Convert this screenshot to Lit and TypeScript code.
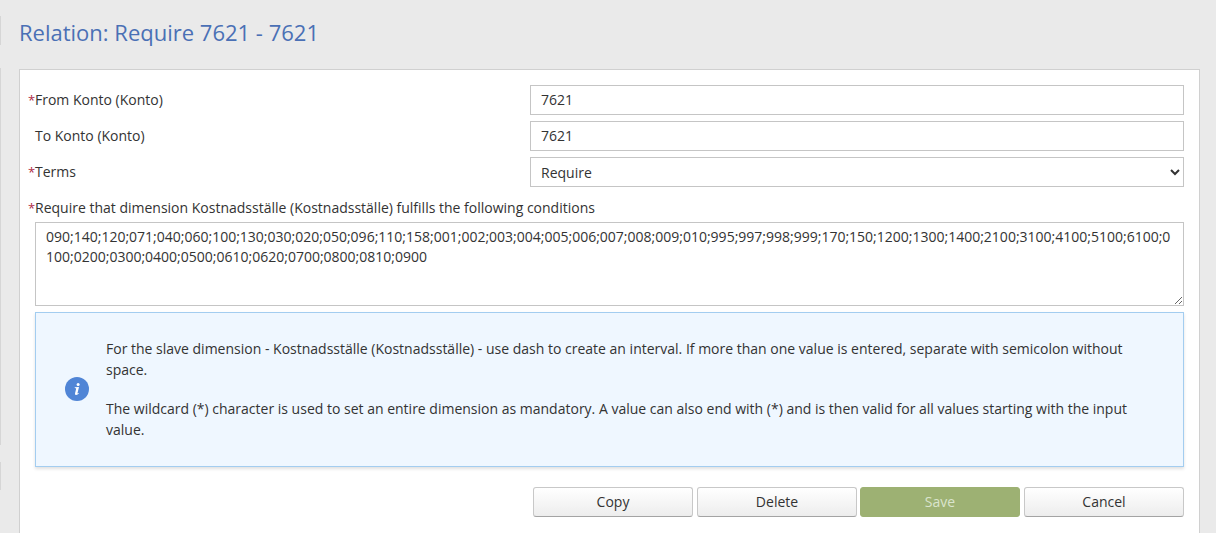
import { LitElement, html, css } from "lit";
import { customElement } from "lit/decorators.js";

const VALUES =
  "090;140;120;071;040;060;100;130;030;020;050;096;110;158;001;002;003;004;005;006;007;008;009;010;995;997;998;999;170;150;1200;1300;1400;2100;3100;4100;5100;6100;0100;0200;0300;0400;0500;0610;0620;0700;0800;0810;0900";

@customElement("app-root")
export class AppRoot extends LitElement {
  static styles = css`
    * { box-sizing: border-box; }
    :host {
      display: flex;
      height: 533px;
      overflow: hidden;
      background: #eaeaea;
      color: #333;
      font: 14px/20px "Open Sans", sans-serif;
    }
    .rail { width: 19px; flex: none; display: flex; flex-direction: column; padding-top: 16px; }
    .rail i { display: block; width: 1px; background: #d6d6d6; flex: none; }
    .r1 { height: 29px; margin-bottom: 23px; }
    .r2 { height: 377px; margin-bottom: 17px; }
    .r3 { height: 28px; }
    .main { width: 1181px; flex: none; display: flex; flex-direction: column; }
    h1 {
      margin: 0;
      height: 69px;
      padding-top: 17px;
      font-size: 22px;
      line-height: 30px;
      font-weight: 400;
      color: #4a70b5;
    }
    .panel {
      flex: 1;
      background: #fff;
      border: 1px solid #d0d0d0;
      border-bottom: 0;
      padding: 15px 15px 0;
    }
    .row { display: flex; height: 30px; margin-bottom: 6px; align-items: center; }
    label { width: 495px; flex: none; }
    .req::before {
      content: "*";
      color: #b02a45;
      font-size: 13px;
      line-height: 1;
      display: inline-block;
      width: 7px;
      margin-left: -7px;
    }
    input, select, textarea {
      font: inherit;
      color: #333;
      border: 1px solid #c5c5c5;
      border-radius: 0;
      background: #fff;
      margin: 0;
      outline: 0;
    }
    input, select { flex: 1; height: 30px; min-width: 0; }
    input { padding: 0 10px 2px; }
    select { padding: 0 0 0 6px; }
    .wide { display: block; height: 20px; width: auto; margin: 11px 0 4px; }
    textarea {
      display: block;
      width: 100%;
      height: 84px;
      padding: 4px 10px;
      word-break: break-all;
      resize: both;
      overflow: auto;
    }
    .info {
      margin-top: 6px;
      height: 155px;
      display: flex;
      align-items: center;
      background: #eff7ff;
      border: 1px solid #a3cdf0;
      box-shadow: 0 2px 3px rgba(0, 0, 0, 0.12);
      padding: 0 29px;
    }
    .info svg { width: 24px; height: 24px; flex: none; margin: 0 17px 1px 0; }
    .info p { margin: 0; line-height: 20.25px; }
    .info p + p { margin-top: 19.5px; }
    .actions { display: flex; justify-content: flex-end; gap: 4px; margin-top: 20px; }
    button {
      width: 160px;
      height: 30px;
      padding: 0;
      font: inherit;
      color: #333;
      border: 1px solid #c8c8c8;
      border-bottom-color: #a4a4a4;
      border-radius: 3px;
      background: linear-gradient(#fff, #ededed);
    }
    .save { background: #9db173; border-color: #9db173; color: #dae4cd; margin: 0 0 0 -1px; }
  `;

  render() {
    return html`
      <div class="rail"><i class="r1"></i><i class="r2"></i><i class="r3"></i></div>
      <div class="main">
        <h1>Relation: Require 7621 - 7621</h1>
        <div class="panel">
          <div class="row"><label class="req">From Konto (Konto)</label><input .value=${"7621"} /></div>
          <div class="row"><label>To Konto (Konto)</label><input .value=${"7621"} /></div>
          <div class="row">
            <label class="req">Terms</label>
            <select><option>Require</option></select>
          </div>
          <label class="wide req">Require that dimension Kostnadsställe (Kostnadsställe) fulfills the following conditions</label>
          <textarea spellcheck="false" .value=${VALUES}></textarea>
          <div class="info">
            <svg viewBox="0 0 24 24">
              <circle cx="12" cy="12" r="12" fill="#5085d6" />
              <circle cx="13.1" cy="7.6" r="1.5" fill="#fff" />
              <path d="M9.8 10.3L14 9.9L12.5 16.1Q12.5 16.8 13.7 16.1L13.9 16.6Q12.6 18 11.2 18Q9.7 18 10 16.5L11.2 11.4Q11.2 10.9 9.7 10.9Z" fill="#fff" />
            </svg>
            <div>
              <p>For the slave dimension - Kostnadsställe (Kostnadsställe) - use dash to create an interval. If more than one value is entered, separate with semicolon without space.</p>
              <p>The wildcard (*) character is used to set an entire dimension as mandatory. A value can also end with (*) and is then valid for all values starting with the input value.</p>
            </div>
          </div>
          <div class="actions">
            <button>Copy</button>
            <button>Delete</button>
            <button class="save">Save</button>
            <button>Cancel</button>
          </div>
        </div>
      </div>
    `;
  }
}
